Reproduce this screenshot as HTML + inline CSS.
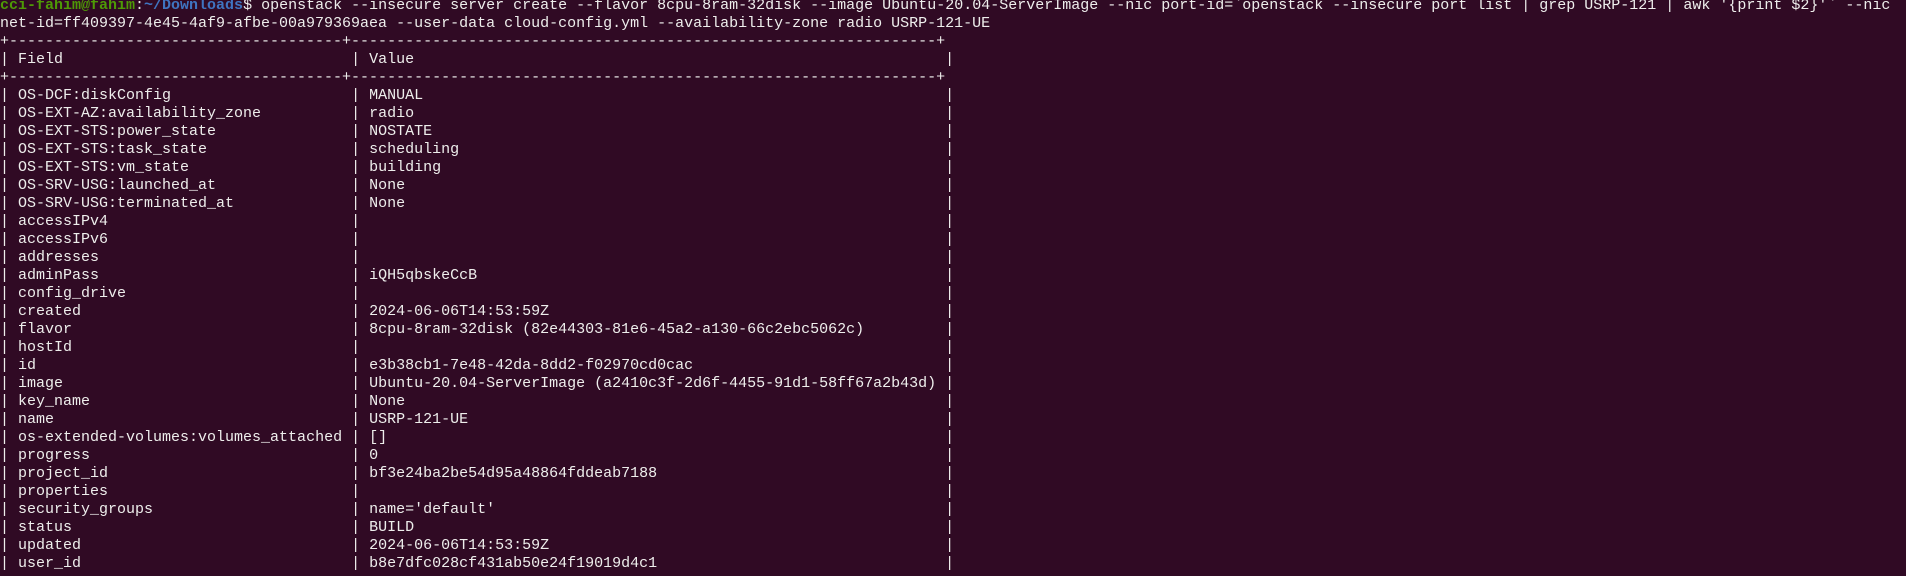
<!DOCTYPE html>
<html><head><meta charset="utf-8"><style>
html,body{margin:0;padding:0;background:#300a24;width:1906px;height:576px;overflow:hidden}
#t{position:absolute;left:0;top:-3px;font-family:"Liberation Mono",monospace;font-size:15px;line-height:18px;color:#eeeeec;white-space:pre}
.g{color:#4e9a06;font-weight:bold}.b{color:#3f74c0;font-weight:bold}
.f{display:inline-block;width:37ch}.v{display:inline-block;width:64ch}
div{height:18px}
</style></head><body><div id="t"><div><span class="g">cci-fahim@fahim</span>:<span class="b">~/Downloads</span>$ openstack --insecure server create --flavor 8cpu-8ram-32disk --image Ubuntu-20.04-ServerImage --nic port-id=`openstack --insecure port list | grep USRP-121 | awk '{print $2}'` --nic</div><div>net-id=ff409397-4e45-4af9-afbe-00a979369aea --user-data cloud-config.yml --availability-zone radio USRP-121-UE</div><div>+-------------------------------------+-----------------------------------------------------------------+</div><div>| <span class="f">Field</span>| <span class="v">Value</span>|</div><div>+-------------------------------------+-----------------------------------------------------------------+</div><div>| <span class="f">OS-DCF:diskConfig</span>| <span class="v">MANUAL</span>|</div><div>| <span class="f">OS-EXT-AZ:availability_zone</span>| <span class="v">radio</span>|</div><div>| <span class="f">OS-EXT-STS:power_state</span>| <span class="v">NOSTATE</span>|</div><div>| <span class="f">OS-EXT-STS:task_state</span>| <span class="v">scheduling</span>|</div><div>| <span class="f">OS-EXT-STS:vm_state</span>| <span class="v">building</span>|</div><div>| <span class="f">OS-SRV-USG:launched_at</span>| <span class="v">None</span>|</div><div>| <span class="f">OS-SRV-USG:terminated_at</span>| <span class="v">None</span>|</div><div>| <span class="f">accessIPv4</span>| <span class="v"></span>|</div><div>| <span class="f">accessIPv6</span>| <span class="v"></span>|</div><div>| <span class="f">addresses</span>| <span class="v"></span>|</div><div>| <span class="f">adminPass</span>| <span class="v">iQH5qbskeCcB</span>|</div><div>| <span class="f">config_drive</span>| <span class="v"></span>|</div><div>| <span class="f">created</span>| <span class="v">2024-06-06T14:53:59Z</span>|</div><div>| <span class="f">flavor</span>| <span class="v">8cpu-8ram-32disk (82e44303-81e6-45a2-a130-66c2ebc5062c)</span>|</div><div>| <span class="f">hostId</span>| <span class="v"></span>|</div><div>| <span class="f">id</span>| <span class="v">e3b38cb1-7e48-42da-8dd2-f02970cd0cac</span>|</div><div>| <span class="f">image</span>| <span class="v">Ubuntu-20.04-ServerImage (a2410c3f-2d6f-4455-91d1-58ff67a2b43d)</span>|</div><div>| <span class="f">key_name</span>| <span class="v">None</span>|</div><div>| <span class="f">name</span>| <span class="v">USRP-121-UE</span>|</div><div>| <span class="f">os-extended-volumes:volumes_attached</span>| <span class="v">[]</span>|</div><div>| <span class="f">progress</span>| <span class="v">0</span>|</div><div>| <span class="f">project_id</span>| <span class="v">bf3e24ba2be54d95a48864fddeab7188</span>|</div><div>| <span class="f">properties</span>| <span class="v"></span>|</div><div>| <span class="f">security_groups</span>| <span class="v">name='default'</span>|</div><div>| <span class="f">status</span>| <span class="v">BUILD</span>|</div><div>| <span class="f">updated</span>| <span class="v">2024-06-06T14:53:59Z</span>|</div><div>| <span class="f">user_id</span>| <span class="v">b8e7dfc028cf431ab50e24f19019d4c1</span>|</div></div></body></html>
